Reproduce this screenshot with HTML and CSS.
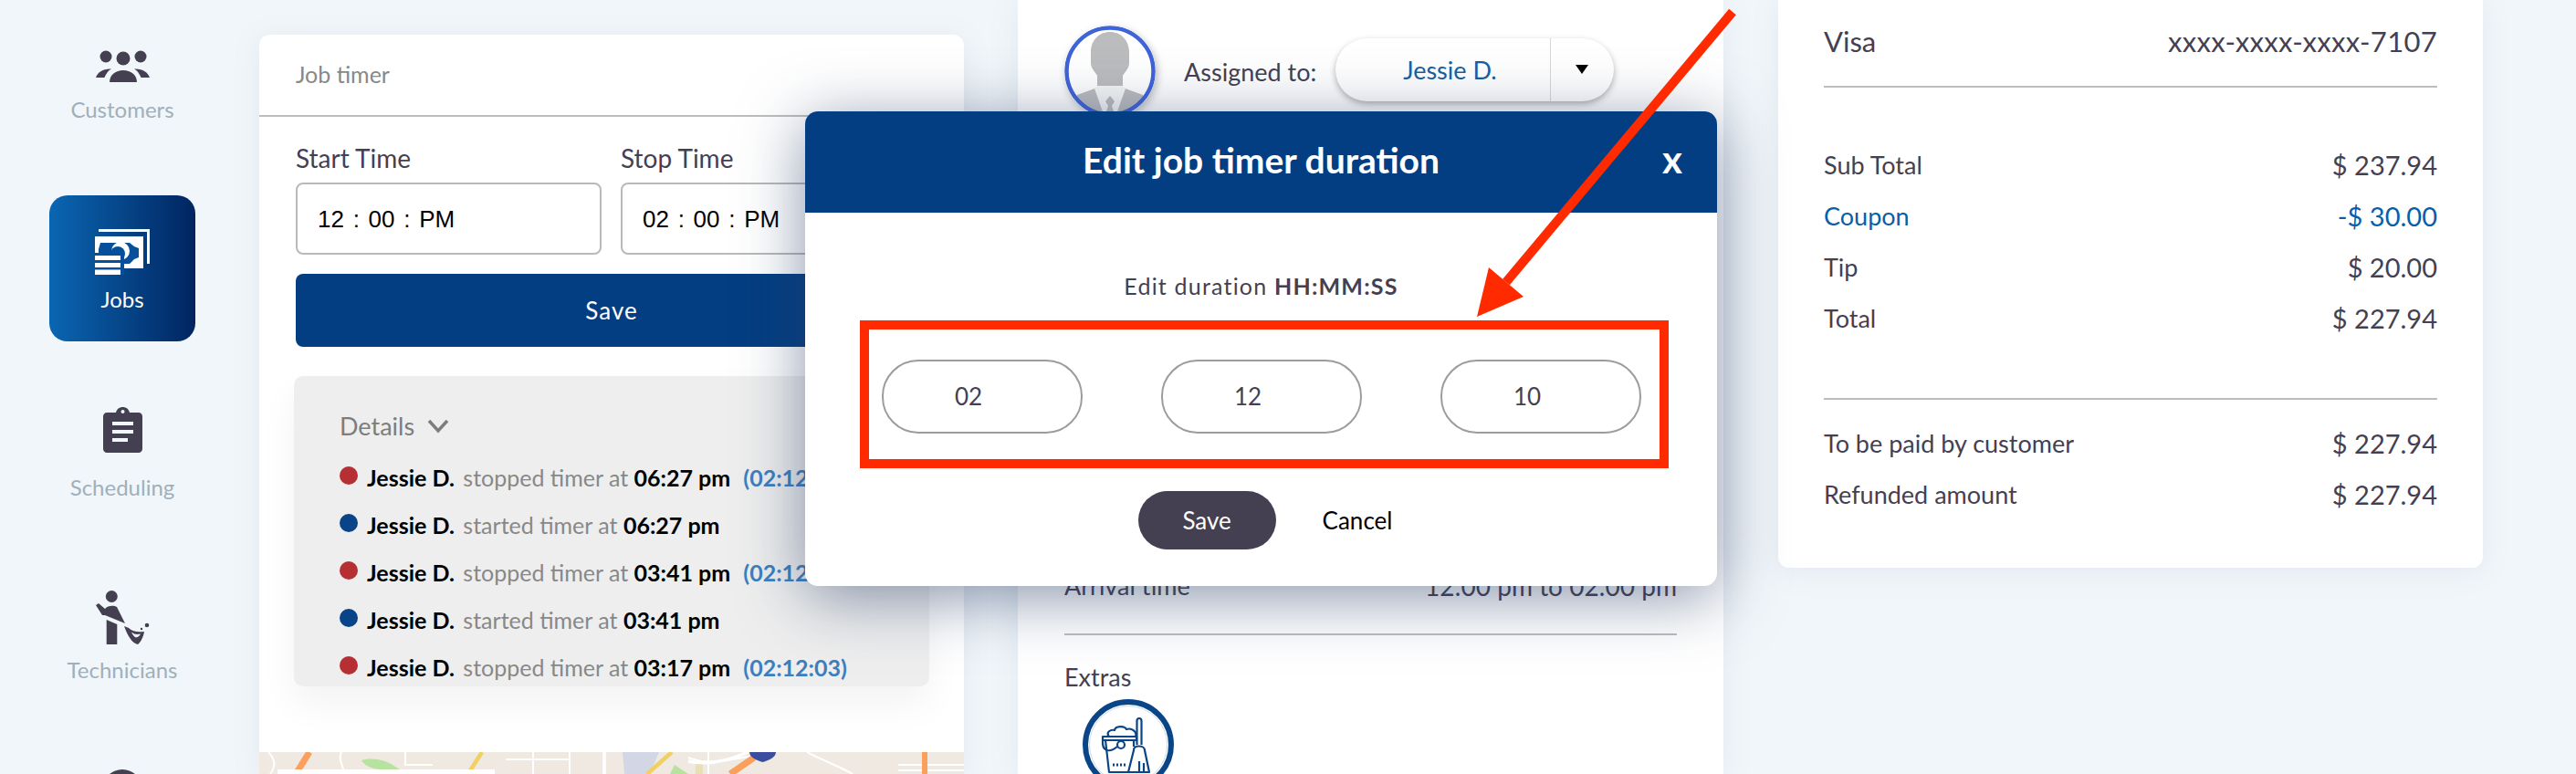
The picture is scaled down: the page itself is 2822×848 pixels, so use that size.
FILE: index.html
```html
<!DOCTYPE html>
<html lang="en">
<head>
  <meta charset="UTF-8" />
  <title>Job details</title>
  <link rel="stylesheet" href="styles.css">
</head>
<body>

  <div class="page">

    <!-- Sidebar -->
    <nav class="sidebar">
      <a class="nav-item nav-item-customers">
        <svg class="nav-icon" width="61" height="35" viewBox="0 0 61 35" fill="#453f52">
          <circle cx="12" cy="7" r="6.5"/>
          <circle cx="31" cy="9" r="7.5"/>
          <circle cx="50" cy="7" r="6.5"/>
          <path d="M16 35C16 27 23 22 31 22C39 22 46 27 46 35Z"/>
          <path d="M1 30C3 24 9 20 18 20.5C15 22 12 26 10.500 30Z"/>
          <path d="M60 30C58 24 52 20 43 20.500C46 22 49 26 50.500 30Z"/>
        </svg>
        <span>Customers</span>
      </a>
      <a class="nav-item nav-item-active">
        <svg class="nav-icon" width="60" height="50" viewBox="0 0 60 50" fill="#fff">
          <path d="M4 0H60V38H57V3H4Z"/>
          <path d="M0 8H53V43H29V26H0Z"/>
          <path fill="#06509b" d="M4 22L6 15H38L43 19L48 21V31L43 33L38 38H32V26H4Z"/>
          <circle cx="28" cy="24" r="10"/>
          <circle cx="25" cy="27" r="8" fill="#06509b"/>
          <path fill="#06509b" d="M0 26H32V50H0Z"/>
          <path d="M0 29H28V34H0ZM0 37H28V42H0ZM0 44.500H28V50H0Z"/>
        </svg>
        <span>Jobs</span>
      </a>
      <a class="nav-item nav-item-scheduling">
        <svg class="nav-icon" width="43" height="50" viewBox="0 0 43 50">
          <path fill="#453f52" d="M4 6H14C15 2 18 0 21.500 0C25 0 28 2 29 6H39C41 6 43 8 43 10V46C43 48 41 50 39 50H4C2 50 0 48 0 46V10C0 8 2 6 4 6Z"/>
          <circle cx="21.500" cy="5" r="2" fill="#f1f6fa"/>
          <path fill="#f1f6fa" d="M10 16H33V20H10ZM10 25H33V29H10ZM10 34H27V38H10Z"/>
        </svg>
        <span>Scheduling</span>
      </a>
      <a class="nav-item">
        <svg class="nav-icon" width="60" height="60" viewBox="0 0 60 60" fill="#453f52">
          <circle cx="18.300" cy="6.500" r="6.500"/>
          <path d="M1 16L4 14L11 20C14 16 21 16 24 18L33 36L11 27L8 27Z"/>
          <path d="M12.700 32L24.300 37V59H12.700Z"/>
          <path d="M32 39L37 41C41 45 47 46 54 45C53 51 50 57 47 59C41 58 36 50 32 39Z"/>
          <path fill="#f1f6fa" d="M40 45.500C43 48 46 48.500 50 47.500C49 50 47 51 45 51.500C43 51 41 48 40 45.500Z"/>
          <circle cx="57" cy="38" r="2.300"/>
          <circle cx="51" cy="42" r="1.200"/>
        </svg>
        <span>Technicians</span>
      </a>
      <a class="nav-item nav-item-last">
        <svg class="nav-icon" width="44" height="44" viewBox="0 0 44 44" fill="#453f52">
          <circle cx="22" cy="22" r="22"/>
        </svg>
      </a>
    </nav>

    <!-- Job timer -->
    <section class="card timer-card">
      <div class="timer-title">Job timer</div>
      <div class="timer-body">
        <div class="time-grid">
          <div>
            <div class="time-label">Start Time</div>
            <div class="time-input">12 : 00 : PM</div>
          </div>
          <div>
            <div class="time-label">Stop Time</div>
            <div class="time-input">02 : 00 : PM</div>
          </div>
        </div>
        <button class="save-wide">Save</button>
        <div class="details">
          <div class="details-head">
            Details
            <svg width="24" height="16" viewBox="0 0 24 16" fill="none" stroke="#7d7d7d" stroke-width="3.500">
              <path d="M2 2L12 13L22 2"/>
            </svg>
          </div>
          <div class="log-row"><i class="dot dot-red"></i><b>Jessie D.</b> stopped timer at <b>06:27 pm</b> <em>(02:12:03)</em></div>
          <div class="log-row"><i class="dot dot-blue"></i><b>Jessie D.</b> started timer at <b>06:27 pm</b></div>
          <div class="log-row"><i class="dot dot-red"></i><b>Jessie D.</b> stopped timer at <b>03:41 pm</b> <em>(02:12:03)</em></div>
          <div class="log-row"><i class="dot dot-blue"></i><b>Jessie D.</b> started timer at <b>03:41 pm</b></div>
          <div class="log-row"><i class="dot dot-red"></i><b>Jessie D.</b> stopped timer at <b>03:17 pm</b> <em>(02:12:03)</em></div>
        </div>
      </div>
      <div class="map">
        <svg width="772" height="24" viewBox="0 0 772 24" fill="none">
          <path d="M398 0H438L428 24H400Z" fill="#d3d6e4"/>
          <path d="M112 9C125 5 140 10 146 14L154 19C140 21 118 20 112 9Z" fill="#b7e2a0"/>
          <path d="M455 14L470 24H450Z" fill="#b7e2a0"/>
          <path d="M478 8H486V24H478Z" fill="#e8dfb4"/>
          <path d="M10 0C18 8 18 16 12 24M90 0C85 10 95 18 92 24M160 0V14H190M270 8H340M300 0V24M340 0V24M378 0V24M470 6C490 14 510 10 540 4M492 0V24M600 0C620 10 640 18 650 24M700 14H772M700 20H772" stroke="#fff" stroke-width="2"/>
          <path d="M378 0V24M470 10C490 14 510 12 535 0" stroke="#fff" stroke-width="3.500"/>
          <path d="M55 0L40 24" stroke="#fb9f5c" stroke-width="7"/>
          <path d="M244 0L230 22" stroke="#f1cf62" stroke-width="4.500"/>
          <path d="M452 0L425 24" stroke="#f1cf62" stroke-width="4.500"/>
          <path d="M542 6L516 24" stroke="#fb9f5c" stroke-width="7"/>
          <path d="M729 0V24" stroke="#fb9f5c" stroke-width="6"/>
          <path d="M537 0H566C566 6 558 9 551.500 11C545 9 537 6 537 0Z" fill="#3a4ea0"/>
        </svg>
        <div class="map-box"></div>
      </div>
    </section>

    <!-- Job info -->
    <section class="card info-card">
      <div class="assign-row">
        <svg class="avatar" width="100" height="100" viewBox="0 0 100 100">
          <defs>
            <clipPath id="avatarClip"><circle cx="50" cy="50" r="48"/></clipPath>
          </defs>
          <circle cx="50" cy="50" r="48" fill="#fff"/>
          <g clip-path="url(#avatarClip)" fill="#bbbcbe">
            <path d="M50 7C62 7 71 16 71 29V41C71 47 66 51 64 55V68L86 76V100H14V76L36 68V55C34 51 29 47 29 41V29C29 16 38 7 50 7Z"/>
            <path fill="#f6f6f6" d="M33 69L36 66H64L67 69L56 100H44Z"/>
            <path d="M50 77L55 83L52 88L56 100H44L48 88L45 83Z"/>
          </g>
          <circle cx="50" cy="50" r="47.500" fill="none" stroke="#3f63d8" stroke-width="4.500"/>
        </svg>
        <span class="assign-label">Assigned to:</span>
        <div class="assign-pill">
          <span class="assign-name">Jessie D.</span>
          <span class="assign-caret"></span>
        </div>
      </div>
      <div class="info-row">
        <span>Arrival time</span>
        <span class="info-value">12:00 pm to 02:00 pm</span>
      </div>
      <div class="info-line"></div>
      <div class="extras-label">Extras</div>
      <svg class="extras-icon" width="100" height="100" viewBox="0 0 100 100" fill="none" stroke="#0a4587">
        <circle cx="50" cy="50" r="47" stroke-width="6"/>
        <circle cx="50" cy="50" r="42.500" stroke="#cfdbe8" stroke-width="1"/>
        <g stroke-width="2.200" stroke-linejoin="round">
          <path d="M22 41H59V45H22Z"/>
          <path d="M25 45L29 80H52M56 45V52"/>
          <path d="M29 41C25 36 31 33 35 34C36 29 46 29 48 33C54 31 60 36 58 41"/>
          <circle cx="42" cy="50" r="4"/>
          <path d="M22 45C21 56 28 60 38 52"/>
          <path d="M33 72H47" stroke-dasharray="2 2" stroke-width="3"/>
          <path d="M59.500 50V24C59.500 20 64.500 20 64.500 24V50"/>
          <path d="M56 56C55 50 68 50 68 56L73 80H50Z"/>
          <path d="M62 68V80M67 70V80"/>
        </g>
      </svg>
    </section>

    <!-- Payment -->
    <section class="card pay-card">
      <div class="pay-row pay-visa"><span>Visa</span><span class="pay-number">xxxx-xxxx-xxxx-7107</span></div>
      <div class="pay-line"></div>
      <div class="pay-group">
        <div class="pay-row"><span>Sub Total</span><span>$ 237.94</span></div>
        <div class="pay-row pay-coupon"><span>Coupon</span><span>-$ 30.00</span></div>
        <div class="pay-row"><span>Tip</span><span>$ 20.00</span></div>
        <div class="pay-row"><span>Total</span><span>$ 227.94</span></div>
      </div>
      <div class="pay-line pay-line-low"></div>
      <div class="pay-group pay-group-low">
        <div class="pay-row"><span>To be paid by customer</span><span>$ 227.94</span></div>
        <div class="pay-row"><span>Refunded amount</span><span>$ 227.94</span></div>
      </div>
    </section>
  </div>

  <!-- Edit duration modal -->
  <div class="modal">
    <div class="modal-head">
      <span class="modal-title">Edit job timer duration</span>
      <span class="modal-close">x</span>
    </div>
    <div class="modal-hint">Edit duration <b>HH:MM:SS</b></div>
    <div class="mark-box">
      <div class="duration-field">02</div>
      <div class="duration-field">12</div>
      <div class="duration-field">10</div>
    </div>
    <div class="modal-actions">
      <button class="save-pill">Save</button>
      <span class="cancel-link">Cancel</span>
    </div>
  </div>

  <!-- Red arrow drawn over the screenshot -->
  <svg class="arrow" width="2822" height="848" viewBox="0 0 2822 848">
    <path d="M1898 13L1650 309" stroke="#ff2a00" stroke-width="10" fill="none"/>
    <path d="M1618 347L1631 293L1669 325Z" fill="#ff2a00"/>
  </svg>

</body>
</html>
```

FILE: styles.css
```css
/* ======= Base ======= */
body {
  margin: 0;
  height: 848px;
  overflow: hidden;
  position: relative;
  background-color: #f1f6fa;
  font-family: "Lato", sans-serif;
  color: #453f52;
}

.page {
  display: flex;
  align-items: flex-start;
  height: 848px;
}

.card {
  background-color: #fff;
  width: 772px;
  box-shadow: 0 4px 30px rgba(120, 140, 160, 0.12);
  box-sizing: border-box;
}

/* ======= Sidebar ======= */
.sidebar {
  width: 284px;
  flex-shrink: 0;
  height: 848px;
  box-sizing: border-box;
  padding: 6px 70px 0 54px;
  display: grid;
  grid-template-rows: 208px 206px 200px 200px 160px;
  overflow: hidden;
}

.nav-item {
  height: 160px;
  box-sizing: border-box;
  padding-bottom: 31px;
  display: flex;
  flex-direction: column;
  align-items: center;
  justify-content: flex-end;
  gap: 12px;
  font-size: 24px;
  line-height: 30px;
  color: #9fb0ba;
}

.nav-item-customers { gap: 15px; }
.nav-item-scheduling { gap: 23px; }

.nav-item-active {
  color: #fff;
  border-radius: 20px;
  background: linear-gradient(90deg, #0a66b2, #012560);
}

.nav-item-last {
  justify-content: flex-start;
  padding-top: 23px;
}

.nav-icon {
  display: block;
  flex-shrink: 0;
}

/* ======= Job timer ======= */
.timer-card {
  margin-top: 38px;
  height: 810px;
  border-radius: 12px 12px 0 0;
  display: flex;
  flex-direction: column;
}

.timer-title {
  height: 88px;
  line-height: 86px;
  padding-left: 40px;
  font-size: 25px;
  color: #888;
  border-bottom: 2px solid #bdbdbd;
  box-sizing: content-box;
}

.timer-body {
  padding: 27px 40px 0;
  flex: 1;
}

.time-grid {
  display: grid;
  grid-template-columns: 335px 336px;
  gap: 21px;
}

.time-label {
  font-size: 28px;
  line-height: 36px;
  margin-bottom: 9px;
}

.time-input {
  height: 79px;
  line-height: 77px;
  box-sizing: border-box;
  padding-left: 22px;
  border: 2px solid #b9b9b9;
  border-radius: 8px;
  font-family: "Liberation Sans", sans-serif;
  font-size: 26px;
  word-spacing: 2.500px;
  color: #000;
  white-space: pre;
}

.save-wide {
  display: block;
  width: 692px;
  height: 80px;
  margin-top: 21px;
  border: 0;
  border-radius: 8px;
  background-color: #033e82;
  color: #fff;
  font-family: inherit;
  font-size: 26px;
  letter-spacing: 1px;
}

.details {
  margin: 32px -2px 0;
  height: 340px;
  box-sizing: border-box;
  padding: 36px 30px 0 50px;
  overflow: hidden;
  background-color: #eee;
  border-radius: 10px;
  box-shadow: 0 20px 40px rgba(0, 0, 0, 0.05);
}

.details-head {
  display: flex;
  align-items: center;
  gap: 14px;
  font-size: 27px;
  line-height: 38px;
  color: #7d7d7d;
  margin-bottom: 11px;
}

.log-row {
  display: flex;
  align-items: center;
  height: 52px;
  font-size: 25px;
  color: #888;
  white-space: pre-wrap;
}

.log-row b {
  color: #000;
  font-weight: 700;
  margin-right: 3px;
}

.log-row em {
  font-style: normal;
  font-weight: 700;
  color: #3c7fc0;
  margin-left: 11px;
}

.dot {
  width: 20px;
  height: 20px;
  border-radius: 50%;
  margin: -4px 10px 0 0;
  flex-shrink: 0;
}

.dot-red { background-color: #b52f33; }
.dot-blue { background-color: #0a4488; }

.map {
  position: relative;
  height: 24px;
  overflow: hidden;
  background-color: #efe9e1;
}

.map svg {
  display: block;
}

.map-box {
  position: absolute;
  left: 20px;
  top: 19px;
  width: 238px;
  height: 20px;
  background-color: #fff;
}

/* ======= Job info ======= */
.info-card {
  margin-left: 59px;
  width: 773px;
  height: 848px;
  padding: 28px 51px 0;
  overflow: hidden;
}

.assign-row {
  display: flex;
  align-items: center;
  height: 100px;
}

.avatar {
  flex-shrink: 0;
  border-radius: 50%;
  box-shadow: 2px 3px 8px rgba(0, 0, 0, 0.25);
}

.assign-label {
  margin-left: 31px;
  width: 166px;
  font-size: 27px;
}

.assign-pill {
  display: flex;
  align-items: center;
  width: 305px;
  height: 69px;
  margin-top: -4px;
  border-radius: 35px;
  background-color: #fff;
  box-shadow: 0 3px 7px rgba(0, 0, 0, 0.3);
}

.assign-name {
  width: 236px;
  box-sizing: border-box;
  padding-left: 16px;
  line-height: 69px;
  text-align: center;
  font-size: 27px;
  color: #1a5fa0;
  border-right: 1px solid #d8d8d8;
}

.assign-caret {
  margin-left: 27px;
  border-left: 7px solid transparent;
  border-right: 7px solid transparent;
  border-top: 10px solid #000;
}

.info-row {
  display: flex;
  justify-content: space-between;
  margin-top: 494px;
  font-size: 27px;
  line-height: 40px;
}

.info-value {
  font-size: 28px;
}

.info-line {
  height: 2px;
  margin-top: 32px;
  background-color: #bdbdbd;
}

.extras-label {
  margin-top: 28px;
  font-size: 27px;
  line-height: 36px;
}

.extras-icon {
  display: block;
  margin: 6px 0 0 20px;
}

/* ======= Payment ======= */
.pay-card {
  margin-left: 60px;
  height: 622px;
  padding: 25px 50px 0;
  border-radius: 0 0 12px 12px;
}

.pay-row {
  display: flex;
  justify-content: space-between;
  height: 56px;
  line-height: 56px;
  font-size: 27px;
}

.pay-row span:last-child {
  font-size: 29px;
}

.pay-visa {
  height: 40px;
  line-height: 40px;
  font-size: 31px;
}

.pay-visa span.pay-number {
  font-size: 31px;
  letter-spacing: 0.300px;
}

.pay-coupon {
  color: #0a5ea8;
}

.pay-line {
  height: 2px;
  margin-top: 29px;
  background-color: #bdbdbd;
}

.pay-line-low {
  margin-top: 59px;
}

.pay-group {
  margin-top: 57px;
}

.pay-group-low {
  margin-top: 20px;
}

/* ======= Modal ======= */
.modal {
  position: absolute;
  left: 882px;
  top: 122px;
  width: 999px;
  height: 520px;
  background-color: #fff;
  border-radius: 14px;
  box-shadow: 0 12px 70px rgba(40, 60, 100, 0.55);
}

.modal-head {
  position: relative;
  height: 111px;
  line-height: 106px;
  border-radius: 14px 14px 0 0;
  background-color: #033e82;
  color: #fff;
  text-align: center;
  font-weight: 700;
}

.modal-title {
  font-size: 39px;
}

.modal-close {
  position: absolute;
  right: 38px;
  top: -1px;
  font-size: 42px;
}

.modal-hint {
  margin-top: 65px;
  line-height: 30px;
  text-align: center;
  font-size: 25px;
  letter-spacing: 1.200px;
}

.mark-box {
  display: flex;
  gap: 86px;
  box-sizing: border-box;
  height: 162px;
  margin: 23px 53px 0 60px;
  padding: 33px 20px 0 14px;
  border: 10px solid #ff2a00;
}

.duration-field {
  width: 220px;
  height: 81px;
  line-height: 77px;
  box-sizing: border-box;
  padding-right: 30px;
  border: 2px solid #9c9c9c;
  border-radius: 40px;
  text-align: center;
  font-size: 26px;
}

.modal-actions {
  display: flex;
  align-items: center;
  justify-content: center;
  gap: 51px;
  margin-top: 25px;
  padding-left: 9px;
}

.save-pill {
  width: 151px;
  height: 64px;
  border: 0;
  border-radius: 32px;
  background-color: #453f52;
  color: #fff;
  font-family: inherit;
  font-size: 26px;
}

.cancel-link {
  font-size: 26px;
  color: #000;
}

/* ======= Arrow annotation ======= */
.arrow {
  position: absolute;
  left: 0;
  top: 0;
  pointer-events: none;
}
```
